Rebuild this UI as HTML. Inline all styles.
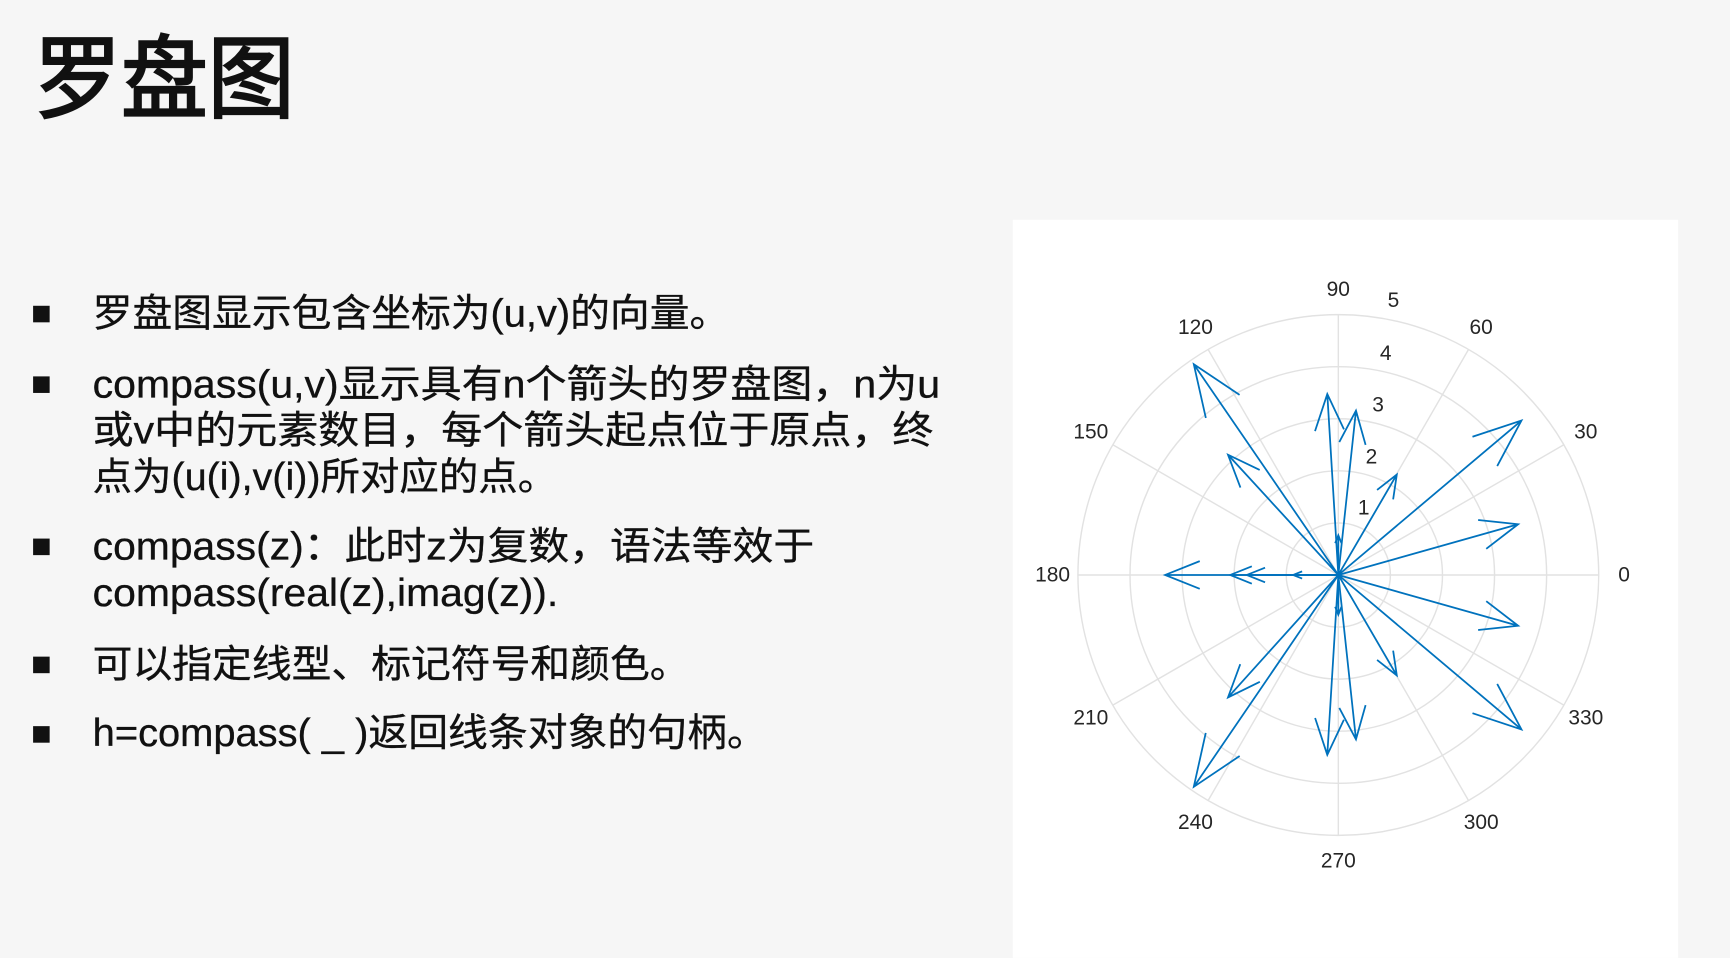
<!DOCTYPE html>
<html><head><meta charset="utf-8"><style>
html,body{margin:0;padding:0;background:#f6f6f6;width:1730px;height:958px;overflow:hidden}
svg{display:block}
</style></head><body>
<svg id="s" width="1730" height="958" viewBox="0 0 1568 868" xmlns="http://www.w3.org/2000/svg" font-family="'Liberation Sans','Noto Sans CJK SC',sans-serif">
<rect width="1568" height="868" fill="#f6f6f6"/>
<text x="31" y="100" font-size="82" fill="#111" stroke="#111" stroke-width="2" textLength="236" lengthAdjust="spacingAndGlyphs">罗盘图</text>
<g fill="#111">
<rect x="30" y="277" width="15" height="15"/>
<rect x="30" y="341" width="15" height="15"/>
<rect x="30" y="488" width="15" height="15"/>
<rect x="30" y="595" width="15" height="15"/>
<rect x="30" y="658" width="15" height="15"/>
</g>
<g font-size="35" fill="#111" stroke="#111" stroke-width="0.3">
<text x="84" y="296" textLength="577" lengthAdjust="spacingAndGlyphs">罗盘图显示包含坐标为(u,v)的向量。</text>
<text x="84" y="360" textLength="768" lengthAdjust="spacingAndGlyphs">compass(u,v)显示具有n个箭头的罗盘图，n为u</text>
<text x="84" y="402" textLength="762" lengthAdjust="spacingAndGlyphs">或v中的元素数目，每个箭头起点位于原点，终</text>
<text x="84" y="444" textLength="421" lengthAdjust="spacingAndGlyphs">点为(u(i),v(i))所对应的点。</text>
<text x="84" y="507" textLength="654" lengthAdjust="spacingAndGlyphs">compass(z)：此时z为复数，语法等效于</text>
<text x="84" y="549" textLength="422" lengthAdjust="spacingAndGlyphs">compass(real(z),imag(z)).</text>
<text x="84" y="614" textLength="541" lengthAdjust="spacingAndGlyphs">可以指定线型、标记符号和颜色。</text>
<text x="84" y="676" textLength="611" lengthAdjust="spacingAndGlyphs">h=compass( _ )返回线条对象的句柄。</text>
</g>
<rect x="918" y="199" width="603" height="669" fill="#ffffff"/>
<g id="plot"></g>
</svg>
<script>
(function(){
var g=document.getElementById('plot');var cx=1213,cy=521,R=236;var s='';
for(var i=1;i<=5;i++)s+='<circle cx="'+cx+'" cy="'+cy+'" r="'+(R*i/5)+'" fill="none" stroke="#e2e2e2" stroke-width="1.3"/>';
for(var a=0;a<360;a+=30){var t=a*Math.PI/180;s+='<line x1="'+cx+'" y1="'+cy+'" x2="'+(cx+R*Math.cos(t))+'" y2="'+(cy-R*Math.sin(t))+'" stroke="#e2e2e2" stroke-width="1.3"/>';
var lx=cx+259*Math.cos(t),ly=cy-259*Math.sin(t)+6;s+='<text x="'+lx+'" y="'+ly+'" font-size="19" fill="#262626" text-anchor="middle">'+a+'</text>';}
var rl=[[1236,466,'1'],[1243,420,'2'],[1249,373,'3'],[1256,326,'4'],[1263,278,'5']];
rl.forEach(function(r){s+='<text x="'+r[0]+'" y="'+r[1]+'" font-size="19" fill="#262626" text-anchor="middle">'+r[2]+'</text>';});
var v=[[-131,191],[-10,164],[16,149],[53,91],[166,140],[-100,109],[163,46],[-157,0],[-98,0],[-83,0],[-41,0],[0,36],[0,-36],[163,-46],[53,-91],[166,-140],[16,-149],[-10,-163],[-100,-111],[-131,-192]];
v.forEach(function(p){var x=p[0],y=-p[1];var tx=cx+x,ty=cy+y;
var bx=cx+0.8*x,by=cy+0.8*y;var px=-y*0.08,py=x*0.08;
s+='<path d="M'+cx+' '+cy+'L'+tx+' '+ty+'M'+(bx+px)+' '+(by+py)+'L'+tx+' '+ty+'L'+(bx-px)+' '+(by-py)+'" fill="none" stroke="#0072BD" stroke-width="1.6" stroke-linejoin="miter"/>';});
g.innerHTML=s;})();
</script>
</body></html>
